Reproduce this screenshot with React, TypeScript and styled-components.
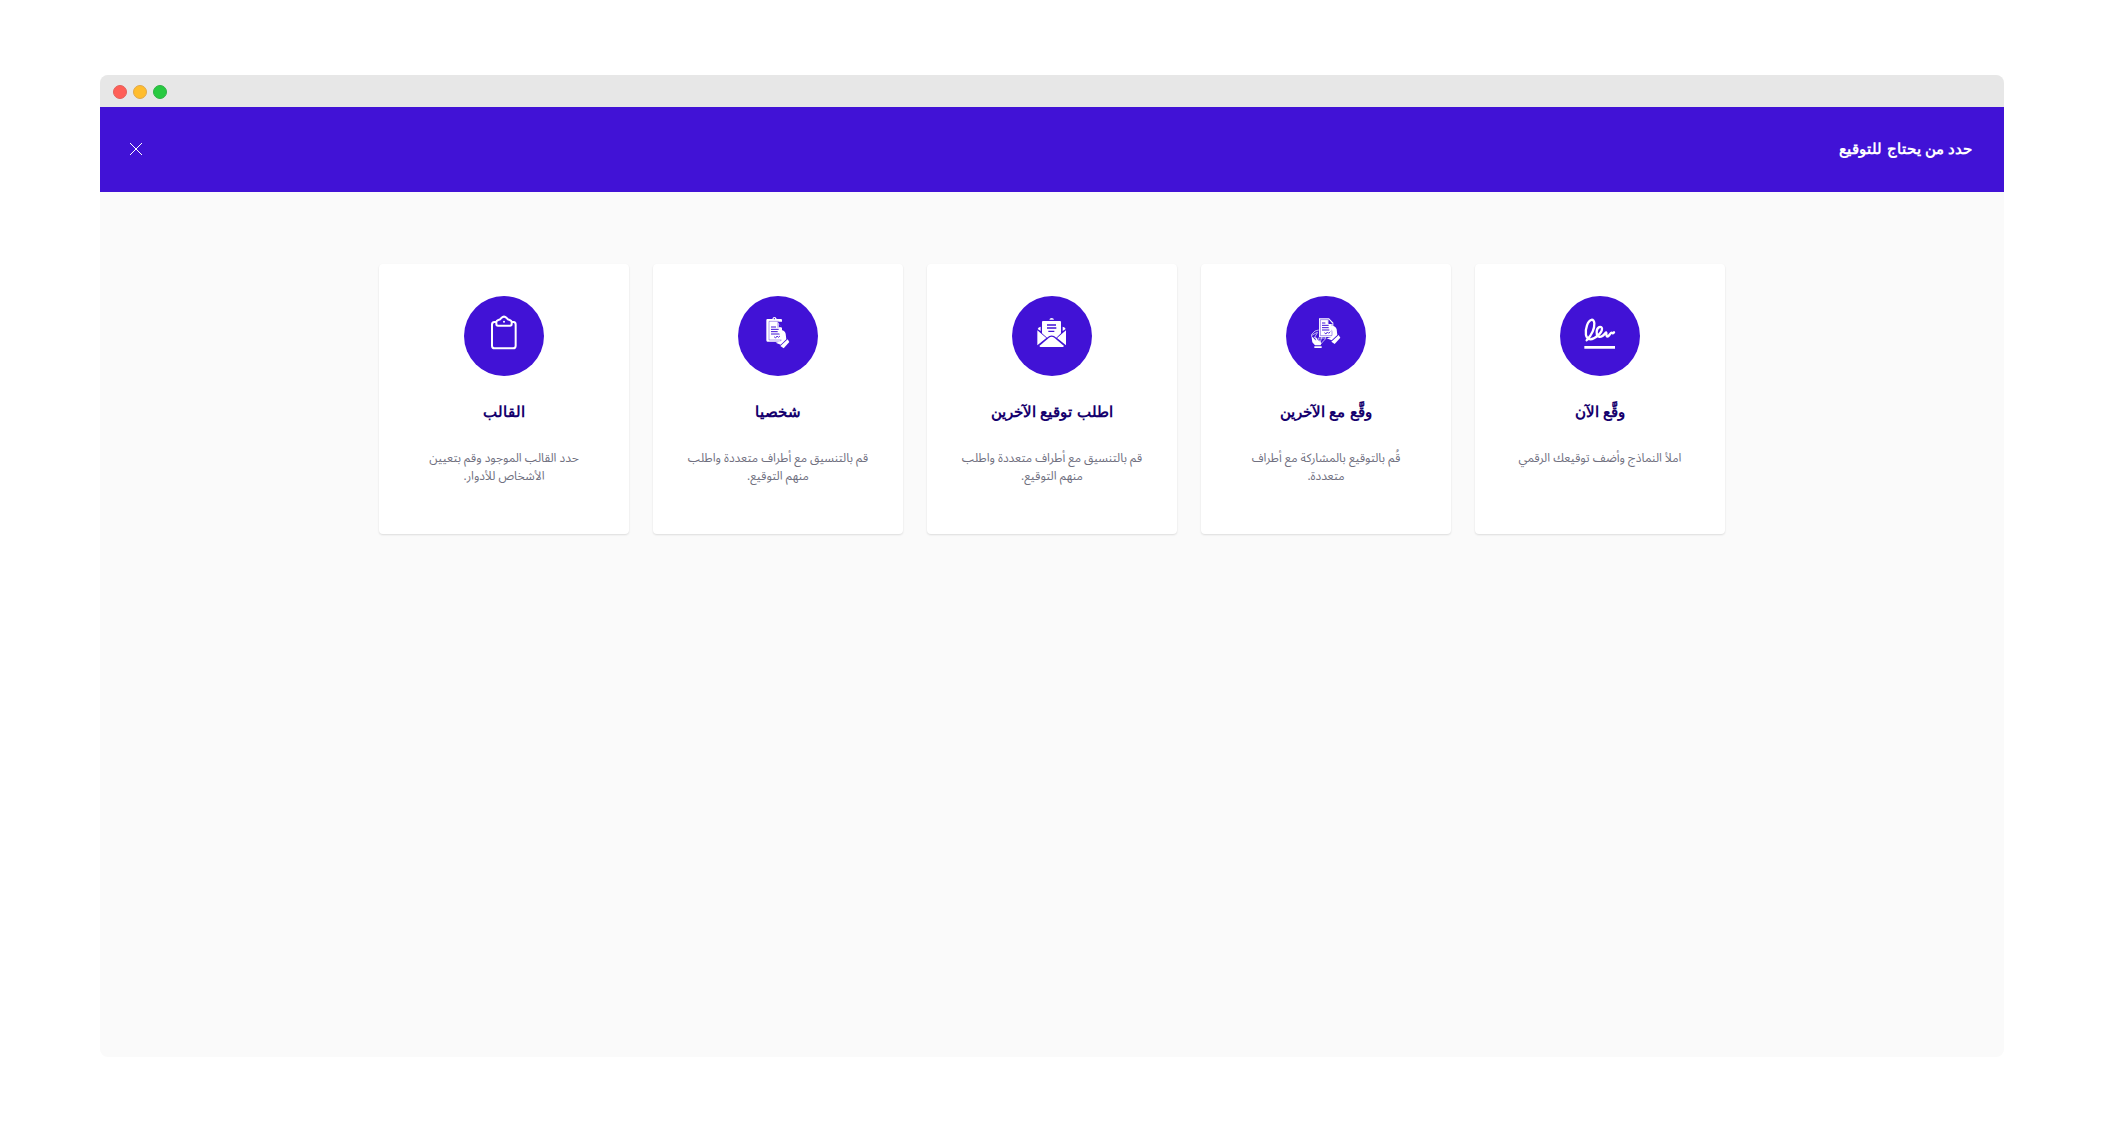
import React from "react";
import styled, { createGlobalStyle } from "styled-components";

const purple = "#4112d6";

const GlobalStyle = createGlobalStyle`
  *, *::before, *::after { box-sizing: border-box; }
  body { margin: 0; background: #ffffff; }
`;

const Page = styled.div`
  min-height: 100vh;
  padding: 75px 100px 76px;
  display: flex;
  font-family: "Open Sans", "Noto Sans Arabic", "Segoe UI", sans-serif;
`;

const Window = styled.div`
  flex: 1;
  display: flex;
  flex-direction: column;
  border-radius: 8px;
  overflow: hidden;
  background: #fafafa;
`;

const TitleBar = styled.div`
  height: 32px;
  padding: 2px 13px 0;
  display: flex;
  align-items: center;
  gap: 6px;
  background: #e7e7e7;
`;

const Light = styled.span<{ $fill: string; $edge: string }>`
  width: 14px;
  height: 14px;
  border-radius: 50%;
  background: ${(p) => p.$fill};
  border: 1px solid ${(p) => p.$edge};
`;

const Header = styled.header`
  height: 85px;
  padding: 0 32px 2px 24px;
  display: flex;
  align-items: center;
  justify-content: space-between;
  background: ${purple};
`;

const HeaderTitle = styled.h1`
  margin: 0;
  font: bold 15px/24px "Liberation Sans", Arial, sans-serif;
  color: #ffffff;
`;

const CloseButton = styled.button`
  width: 24px;
  height: 24px;
  padding: 0;
  display: grid;
  place-items: center;
  border: 0;
  background: none;
  cursor: pointer;
`;

const Options = styled.main`
  padding: 72px 24px;
  display: flex;
  flex-wrap: wrap;
  justify-content: center;
  gap: 24px;
`;

const Card = styled.button`
  width: 250px;
  min-height: 270px;
  padding: 32px;
  display: flex;
  flex-direction: column;
  align-items: center;
  border: 0;
  border-radius: 4px;
  background: #ffffff;
  box-shadow: 0 1px 2px rgba(0, 0, 0, 0.12);
  font-family: inherit;
  text-align: center;
  cursor: pointer;
`;

const Badge = styled.svg`
  width: 80px;
  height: 80px;
  flex: none;
  border-radius: 50%;
  background: ${purple};
`;

const CardTitle = styled.span`
  margin: 24px 0 25px;
  font: bold 15px/24px "Liberation Sans", Arial, sans-serif;
  color: #15006d;
`;

const CardText = styled.span`
  font-size: 12px;
  line-height: 18px;
  color: #70707f;
`;

const SignatureIcon = () => (
  <g fill="none" stroke="#fff" strokeWidth="7" strokeLinecap="round" strokeLinejoin="round">
    <path d="M80 133C90 122 104 102 103 82C102 66 88 68 81 88C74 108 76 130 91 130C105 129 127 110 126 98C125 88 110 92 110 108C110 127 124 127 137 110C141 106 137 122 142 122C147 122 151 110 155 110C157 110 156 115 162 109" />
    <path d="M73 154H165" strokeLinecap="butt" strokeWidth="8" />
  </g>
);

/* A hand holding the right edge of a sheet. */
const Hand = () => (
  <g>
    <path fill="#fff" d="M128 92L136 89Q150 90 152 100L154 117L137 133L122 127L138 122Q142 117 141 108Q139 100 128 97Z" />
    <path fill="#fff" d="M158 117L163 125L146 144L136 137Z" />
  </g>
);

const Sheet = () => (
  <g>
    <path fill="#fff" d="M99 67H129L142 80V123H99Z" />
    <path fill="none" stroke={purple} strokeWidth="2" strokeOpacity="0.7" d="M103 71H127V82H138V119H103Z" />
    <path fill={purple} d="M128 70L140 84H128Z" />
    <path stroke={purple} strokeWidth="3" d="M108 81H118M108 88H128M108 95H130M108 102H130" />
    <path fill="none" stroke={purple} strokeWidth="2.5" d="M115 110L120 114L124 108L128 112L133 107" />
  </g>
);

const TogetherIcon = () => (
  <g>
    <path fill="none" stroke="#fff" strokeWidth="2.5" strokeOpacity="0.8" d="M98 102L87 105L77 115V124M77 118L94 109M95 109L84 127M96 126L105 143L119 128V122M97 126H119M108 122L102 140" />
    <path fill="#fff" d="M77 125Q80 120 84 128L91 134L86 124Q91 122 95 131Q101 134 106 142L104 148H87L79 139Z" />
    <path fill="#fff" d="M85 151H107V156H85Z" />
    <Sheet />
    <Hand />
  </g>
);

const EnvelopeIcon = () => (
  <g>
    <path fill="#fff" d="M112 71Q113 66 119 66Q125 66 126 71Z" />
    <path fill="#fff" d="M93 75H144Q147 75 147 78V112L133 125Q119 112 105 125L90 112V78Q90 75 93 75Z" />
    <path stroke={purple} strokeWidth="4" d="M105 87H132M105 96H133M109 106H127" />
    <path fill="#fff" d="M86 92V105L77 99Q79 93 86 92ZM152 92V105L161 99Q159 93 152 92Z" />
    <path fill="#fff" d="M76 103L103 126L76 148ZM162 103L135 126L162 148Z" />
    <path fill="#fff" d="M82 150L111 125Q119 119 127 125L156 150L153 153H85Z" />
  </g>
);

const InPersonIcon = () => (
  <g>
    <path fill="#fff" d="M88 69H103Q104 63 109 63Q115 63 116 69H129Q132 69 132 73V134Q132 137 129 137H88Q85 137 85 133V73Q85 69 88 69Z" />
    <circle cx="109" cy="68" r="2" fill={purple} />
    <g transform="translate(-5 11)">
      <path fill="none" stroke={purple} strokeWidth="2" strokeOpacity="0.6" d="M98 65H127M98 65V121H136" />
      <path fill={purple} d="M124 66H140V84H124Z" />
      <path fill="#fff" d="M124 66V84H136Z" />
      <path fill={purple} d="M127 71L136 82H127Z" />
      <path stroke={purple} strokeWidth="3" d="M104 82H119M104 89H127M104 96H130M104 103H130" />
      <path fill="none" stroke={purple} strokeWidth="2.5" d="M113 111L118 115L122 109L126 113L131 109" />
    </g>
    <path fill={purple} d="M132 100H140V137H128V133H132Z" />
    <g transform="translate(-9 13)"><Hand /></g>
  </g>
);

const ClipboardIcon = () => (
  <g fill="none" stroke="#fff" strokeWidth="6" strokeLinejoin="round">
    <path d="M97 78H91Q84 78 84 86V149Q84 157 92 157H147Q155 157 155 149V86Q155 78 149 78H143" />
    <path d="M97 78Q97 74 103 72Q109 71 112 66Q120 58 128 66Q131 71 137 72Q143 74 143 78V84Q143 89 138 89H102Q97 89 97 84Z" />
    <circle cx="120" cy="77" r="3" fill="#fff" stroke="none" />
  </g>
);

const options = [
  { title: "وقَّع الآن", text: "املأ النماذج وأضف توقيعك الرقمي", Icon: SignatureIcon },
  { title: "وقَّع مع الآخرين", text: "قُم بالتوقيع بالمشاركة مع أطراف متعددة.", Icon: TogetherIcon },
  { title: "اطلب توقيع الآخرين", text: "قم بالتنسيق مع أطراف متعددة واطلب منهم التوقيع.", Icon: EnvelopeIcon },
  { title: "شخصيا", text: "قم بالتنسيق مع أطراف متعددة واطلب منهم التوقيع.", Icon: InPersonIcon },
  { title: "القالب", text: "حدد القالب الموجود وقم بتعيين الأشخاص للأدوار.", Icon: ClipboardIcon },
];

export default function App() {
  return (
    <Page>
      <GlobalStyle />
      <Window>
        <TitleBar>
          <Light $fill="#ff5f57" $edge="#e2605a" />
          <Light $fill="#ffbd2e" $edge="#e0a84a" />
          <Light $fill="#28ca41" $edge="#2fb045" />
        </TitleBar>
        <Header>
          <CloseButton type="button" aria-label="إغلاق">
            <svg width="12" height="12" viewBox="0 0 12 12" fill="none" stroke="#fff" aria-hidden="true">
              <path d="M0 0L12 12M12 0L0 12" />
            </svg>
          </CloseButton>
          <HeaderTitle dir="rtl" lang="ar">حدد من يحتاج للتوقيع</HeaderTitle>
        </Header>
        <Options dir="rtl" lang="ar">
          {options.map(({ title, text, Icon }) => (
            <Card type="button" key={title}>
              <Badge viewBox="0 0 240 240" aria-hidden="true">
                <Icon />
              </Badge>
              <CardTitle>{title}</CardTitle>
              <CardText>{text}</CardText>
            </Card>
          ))}
        </Options>
      </Window>
    </Page>
  );
}
